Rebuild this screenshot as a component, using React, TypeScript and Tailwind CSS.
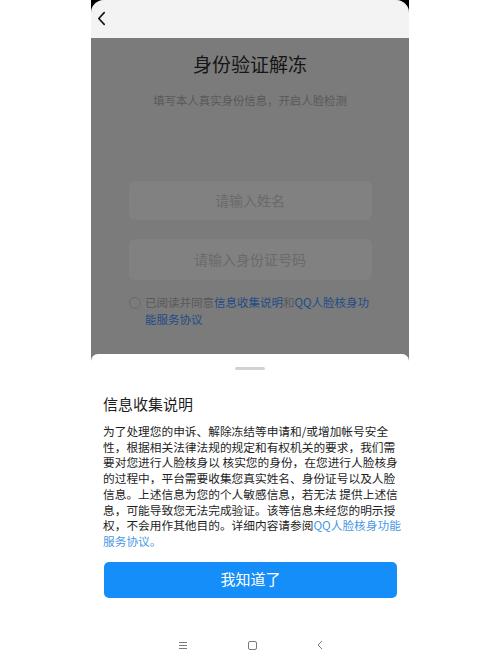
import React from 'react'

const lines: { text: string; link?: string }[] = [
  { text: '为了处理您的申诉、解除冻结等申请和/或增加帐号安全' },
  { text: '性，根据相关法律法规的规定和有权机关的要求，我们需' },
  { text: '要对您进行人脸核身以 核实您的身份，在您进行人脸核身' },
  { text: '的过程中，平台需要收集您真实姓名、身份证号以及人脸' },
  { text: '信息。上述信息为您的个人敏感信息，若无法 提供上述信' },
  { text: '息，可能导致您无法完成验证。该等信息未经您的明示授' },
  { text: '权，不会用作其他目的。详细内容请参阅', link: 'QQ人脸核身功能' },
  { text: '', link: '服务协议。' },
]

function BackIcon({ className }: { className?: string }) {
  return (
    <svg viewBox="0 0 10 16" className={className} fill="none" stroke="currentColor" strokeWidth="1.8" strokeLinecap="round" strokeLinejoin="round">
      <path d="M8 1.5 2 8l6 6.5" />
    </svg>
  )
}

export default function App() {
  return (
    <div className="w-[500px] h-[666px] bg-white flex justify-center overflow-hidden font-['Noto_Sans_CJK_SC','Noto_Sans',sans-serif]">
      <div className="w-[318px] h-[666px] bg-black">
        <div className="h-full rounded-t-[13px] overflow-hidden bg-[#7b7b7b] flex flex-col">
          {/* top nav */}
          <div className="h-[38px] bg-[#f3f3f3] flex items-center pl-[6px] pb-[2px] shrink-0">
            <BackIcon className="w-[9px] h-[15px] text-[#111]" />
          </div>

          {/* dimmed form */}
          <div className="h-[316px] shrink-0 flex flex-col items-center">
            <h1 className="mt-[14px] text-[19px] leading-[24px] text-[#151515]">身份验证解冻</h1>
            <p className="mt-[16px] text-[11.4px] leading-[16px] text-[#595959]">填写本人真实身份信息，开启人脸检测</p>
            <div className="mt-[73px] w-[243px] h-[39px] rounded-[6px] bg-[#818181] flex items-center justify-center text-[14px] text-[#6a6a6a]">
              请输入姓名
            </div>
            <div className="mt-[19px] w-[243px] h-[41px] rounded-[6px] bg-[#818181] flex items-center justify-center text-[14px] text-[#6a6a6a]">
              请输入身份证号码
            </div>
            <div className="mt-[14px] w-[250px] ml-[8px] flex items-start gap-[4px]">
              <span className="mt-[3px] w-[12px] h-[12px] rounded-full border border-[#6a6a6a] shrink-0" />
              <p className="text-[11.5px] leading-[17px] text-[#595959]">
                已阅读并同意<span className="text-[#1f4c86]">信息收集说明</span>和<span className="text-[#1f4c86]">QQ人脸核身功能服务协议</span>
              </p>
            </div>
          </div>

          {/* sheet */}
          <div className="flex-1 bg-white rounded-t-[7px] flex flex-col px-[12px]">
            <div className="mt-[13px] self-center w-[30px] h-[3px] rounded-full bg-[#d2d2d2]" />
            <h2 className="mt-[24px] text-[15px] leading-[20px] text-[#1e1e1e]">信息收集说明</h2>
            <div className="mt-[9px] text-[11.7px] leading-[15.7px] text-[#1e1e1e]">
              {lines.map((l, i) => (
                <div key={i} className="whitespace-nowrap">
                  {l.text}
                  {l.link && <span className="text-[#4b98e4]">{l.link}</span>}
                </div>
              ))}
            </div>
            <button className="mt-[13px] ml-[1px] h-[36px] rounded-[5px] bg-[#168efa] text-white text-[15px]">
              我知道了
            </button>

            {/* system nav */}
            <div className="mt-auto h-[42px] flex items-center justify-center gap-[60px] text-[#7a7a7a]">
              <svg viewBox="0 0 10 9" className="w-[10px] h-[9px]" stroke="currentColor" strokeWidth="1">
                <path d="M1 1.5h8M1 4.5h8M1 7.5h8" />
              </svg>
              <span className="w-[9px] h-[9px] rounded-[2px] border border-current" />
              <svg viewBox="0 0 6 10" className="w-[6px] h-[10px]" fill="none" stroke="currentColor" strokeWidth="1">
                <path d="M5 1 1 5l4 4" />
              </svg>
            </div>
          </div>
        </div>
      </div>
    </div>
  )
}
